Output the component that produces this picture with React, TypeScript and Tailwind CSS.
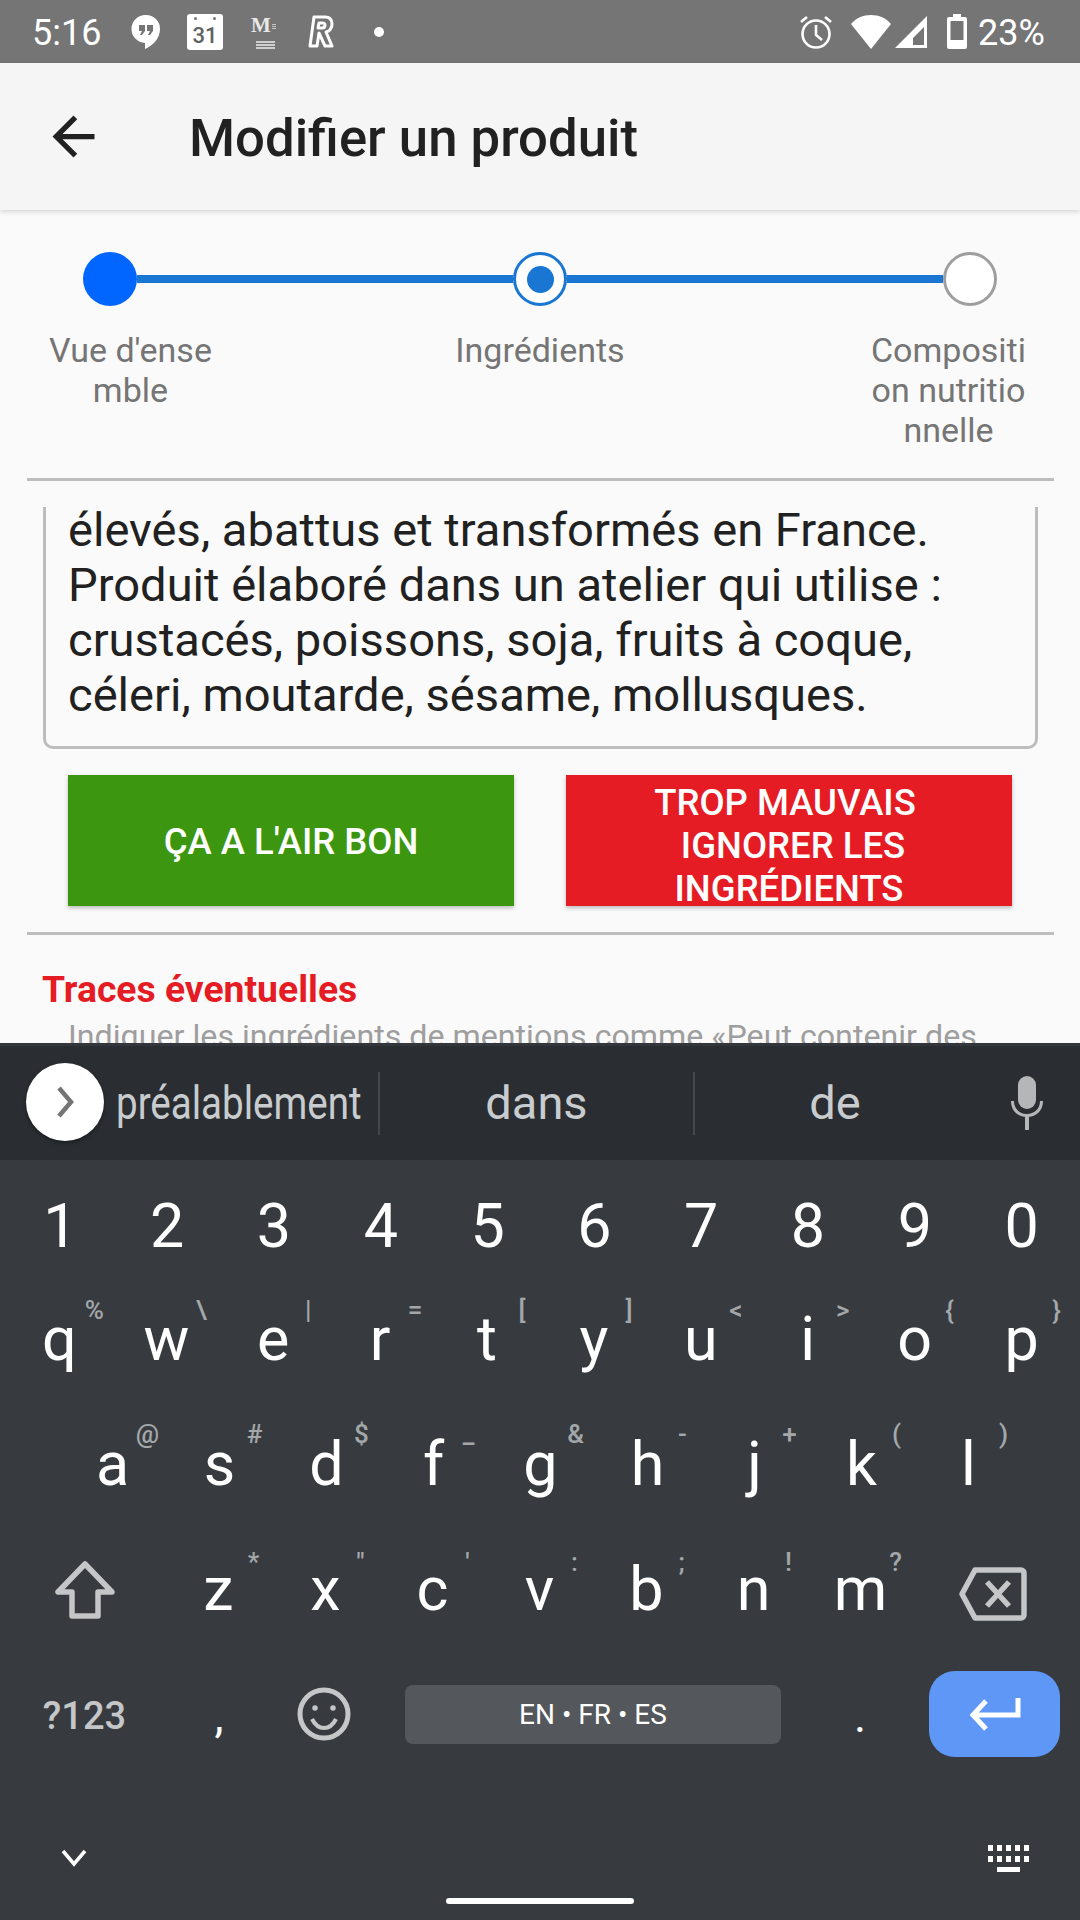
const digits = ["1", "2", "3", "4", "5", "6", "7", "8", "9", "0"];

const topRow = [
  ["q", "%"],
  ["w", "\\"],
  ["e", "|"],
  ["r", "="],
  ["t", "["],
  ["y", "]"],
  ["u", "<"],
  ["i", ">"],
  ["o", "{"],
  ["p", "}"],
];

const midRow = [
  ["a", "@"],
  ["s", "#"],
  ["d", "$"],
  ["f", "_"],
  ["g", "&"],
  ["h", "-"],
  ["j", "+"],
  ["k", "("],
  ["l", ")"],
];

const lowRow = [
  ["z", "*"],
  ["x", '"'],
  ["c", "'"],
  ["v", ":"],
  ["b", ";"],
  ["n", "!"],
  ["m", "?"],
];

const Key = ({ label, hint, hintTop }: { label: string; hint: string; hintTop: string }) => (
  <div className="relative flex items-center justify-center h-full text-[61px] text-white">
    <span>{label}</span>
    <span className={`absolute left-[calc(50%+35px)] ${hintTop} -translate-x-1/2 text-[26px] leading-[30px] font-medium text-[#a4a7aa]`}>
      {hint}
    </span>
  </div>
);

const StatusBar = () => (
  <div className="flex items-center h-[63px] bg-[#757575] text-white text-[36px] pl-[32px] pr-[30px] shrink-0">
    <span className="w-[99px] pt-[2px]">5:16</span>
    <svg width="30" height="36" viewBox="0 0 30 36" fill="white">
      <path d="M15 1a14 14 0 0 0-1 28v6c7-3 15-10 15-20A14 14 0 0 0 15 1z" />
      <path d="M8 11h6v6l-3 4H9l2-4H8zM16 11h6v6l-3 4h-2l2-4h-3z" fill="#757575" />
    </svg>
    <div className="relative ml-[26px] w-[36px] h-[36px] rounded-[3px] bg-white flex items-end justify-center text-[#616161] text-[22px] leading-[28px] font-medium">
      31
      <span className="absolute left-[7px] top-[3px] w-[3px] h-[3px] rounded-full bg-[#757575]" />
      <span className="absolute right-[7px] top-[3px] w-[3px] h-[3px] rounded-full bg-[#757575]" />
    </div>
    <div className="relative ml-[28px] w-[25px] h-[34px] text-[#e8e8e8]">
      <span className="absolute left-0 top-[-2px] text-[21px] leading-[24px] font-bold font-['Liberation_Serif']">M</span>
      <div className="absolute right-0 top-[9px] w-[4px] flex flex-col gap-[1px]">
        <div className="h-[1px] bg-[#c8c8c8]" />
        <div className="h-[1px] bg-[#c8c8c8]" />
        <div className="h-[1px] bg-[#c8c8c8]" />
      </div>
      <div className="absolute left-[5px] bottom-[0px] w-[19px] flex flex-col gap-[1px]">
        <div className="h-[2px] bg-[#cfcfcf]" />
        <div className="h-[2px] bg-[#cfcfcf]" />
        <div className="h-[2px] bg-[#cfcfcf]" />
      </div>
    </div>
    <svg className="ml-[31px]" width="27" height="34" viewBox="0 0 27 34" fill="none" stroke="white" strokeWidth="3" strokeLinejoin="round">
      <path d="M7 2h11c5 0 7 3 7 7 0 4-2 7-6 8l6 14h-7l-6-13-2 13H3z" />
      <path d="M12 8l-1 5h4c2 0 3-1 3-3s-1-2-3-2z" />
    </svg>
    <span className="ml-[40px] w-[10px] h-[10px] rounded-full bg-white" />
    <div className="flex-1" />
    <svg width="34" height="34" viewBox="0 0 34 34" fill="none" stroke="white" strokeWidth="2.6">
      <circle cx="17" cy="19" r="13.5" />
      <path d="M17 10v10l6 5M2 7l6-5M32 7l-6-5" />
    </svg>
    <svg className="ml-[18px]" width="40" height="34" viewBox="0 0 40 34" fill="white">
      <path d="M0 9C5 3 12 0 20 0s15 3 20 9L20 34z" />
    </svg>
    <svg className="ml-[4px]" width="33" height="34" viewBox="0 0 33 34" fill="white">
      <path fillRule="evenodd" d="M0 33 32 1v32zM18 30h11V12l-11 11z" />
    </svg>
    <svg className="ml-[19px]" width="20" height="35" viewBox="0 0 20 35" fill="white">
      <path fillRule="evenodd" d="M6 0h8v3h4a2 2 0 0 1 2 2v28a2 2 0 0 1-2 2H2a2 2 0 0 1-2-2V5a2 2 0 0 1 2-2h4zM3.500 7v19h13V7z" />
    </svg>
    <span className="ml-[11px] w-[72px] pt-[2px] whitespace-nowrap">23%</span>
  </div>
);

const Stepper = () => (
  <div className="h-[268px] shrink-0">
    <div className="flex items-center pt-[42px] pl-[83px] pr-[83px]">
      <div className="w-[54px] h-[54px] rounded-full bg-[#0066ff] shrink-0" />
      <div className="flex-1 h-[8px] bg-[#1976d2]" />
      <div className="w-[54px] h-[54px] rounded-full border-[3px] border-[#1976d2] bg-white shrink-0 flex items-center justify-center">
        <div className="w-[27px] h-[27px] rounded-full bg-[#1976d2]" />
      </div>
      <div className="flex-1 h-[8px] bg-[#1976d2]" />
      <div className="w-[54px] h-[54px] rounded-full border-[3px] border-[#9e9e9e] bg-white shrink-0" />
    </div>
    <div className="grid grid-cols-3 px-[49px] mt-[24px] text-[34px] leading-[40px] text-[#757575] text-center">
      <div className="justify-self-start">Vue d'ense<br />mble</div>
      <div className="justify-self-center">Ingrédients</div>
      <div className="justify-self-end mr-[5px]">Compositi<br />on nutritio<br />nnelle</div>
    </div>
  </div>
);

export default function App() {
  return (
    <div className="w-[1080px] h-[1920px] flex flex-col overflow-hidden bg-[#fafafa] font-[Roboto,sans-serif]">
      <StatusBar />
      <div className="flex items-center h-[147px] bg-[#f5f5f5] shadow-[0_2px_5px_rgba(0,0,0,0.15)] pl-[42px] shrink-0 relative">
        <svg width="63" height="63" viewBox="0 0 24 24" fill="#212121">
          <path d="M20 11H7.830l5.590-5.590L12 4l-8 8 8 8 1.410-1.410L7.830 13H20v-2z" />
        </svg>
        <span className="ml-[84px] pt-[4px] text-[52.700px] font-medium text-[#212121]">Modifier un produit</span>
      </div>

      <div className="h-[833px] overflow-hidden shrink-0">
        <Stepper />
        <div className="ml-[27px] mr-[26px] h-[3px] bg-[#bdbdbd]" />
        <div className="ml-[43px] mr-[42px] mt-[26px] h-[242px] overflow-hidden border-x-[3px] border-b-[3px] border-[#bdbdbd] rounded-b-[10px] pl-[22px] text-[47.100px] leading-[55px] text-[#212121]">
          <div className="-mt-[5px]">
            élevés, abattus et transformés en France.<br />
            Produit élaboré dans un atelier qui utilise :<br />
            crustacés, poissons, soja, fruits à coque,<br />
            céleri, moutarde, sésame, mollusques.
          </div>
        </div>
        <div className="flex justify-between mx-[68px] mt-[26px] text-white text-[36.500px] font-medium leading-[43px] text-center">
          <div className="w-[446px] h-[131px] pt-[2px] bg-[#3c960f] shadow-[0_2px_4px_rgba(0,0,0,0.25)] flex items-center justify-center">
            ÇA A L'AIR BON
          </div>
          <div className="w-[446px] h-[131px] pt-[6px] bg-[#e51c23] shadow-[0_2px_4px_rgba(0,0,0,0.25)] overflow-hidden">
            <span className="block -translate-x-[4px]">TROP MAUVAIS</span>
            <span className="block translate-x-[4px]">IGNORER LES</span>
            <span className="block">INGRÉDIENTS</span>
          </div>
        </div>
        <div className="mr-[26px] ml-[27px] mt-[26px] h-[3px] bg-[#bdbdbd]" />
        <div className="ml-[42px] mt-[34px] text-[37.300px] leading-[40px] font-bold text-[#e51c23]">Traces éventuelles</div>
        <div className="ml-[68px] mt-[7px] text-[32.200px] leading-[40px] text-[#9e9e9e] whitespace-nowrap">
          Indiquer les ingrédients de mentions comme «Peut contenir des
        </div>
      </div>

      {/* keyboard */}
      <div className="relative flex-1 bg-[#373b3f]">
        <div className="flex items-center h-[117px] bg-[#2a2e32] border-t-[3px] border-[#33373b] text-[#c9ccce] text-[47px]">
          <div className="ml-[26px] -mt-[3px] w-[78px] h-[78px] rounded-full bg-white shadow-[0_2px_4px_rgba(0,0,0,0.4)] flex items-center justify-center shrink-0">
            <svg width="24" height="34" viewBox="0 0 24 34" fill="none" stroke="#757575" strokeWidth="4.500">
              <path d="M6 3l12 14L6 31" />
            </svg>
          </div>
          <span className="ml-[12px] w-[262px] whitespace-nowrap origin-left scale-x-[0.82]">préalablement</span>
          <div className="w-[2px] h-[63px] bg-[#44484c]" />
          <span className="w-[313px] text-center">dans</span>
          <div className="w-[2px] h-[63px] bg-[#44484c]" />
          <span className="w-[280px] text-center">de</span>
          <svg width="38" height="54" viewBox="0 0 36 54" fill="#b4b6b8" className="ml-[33px]">
            <rect x="9" y="0" width="18" height="33" rx="9" />
            <path d="M2 25c0 10 7 16 16 16s16-6 16-16h-3c0 8-6 13-13 13S5 33 5 25z" />
            <rect x="16" y="40" width="4" height="14" />
          </svg>
        </div>

        <div className="grid grid-cols-10 pl-[7px] pr-[5px] pt-[10px] h-[123px] text-[61px] text-white text-center">
          {digits.map((d) => (
            <div key={d} className="flex items-center justify-center">{d}</div>
          ))}
        </div>
        <div className="grid grid-cols-10 pl-[6px] pr-[5px] h-[113px] mb-[6px]">
          {topRow.map(([l, h]) => (
            <Key key={l} label={l} hint={h} hintTop="top-[12px]" />
          ))}
        </div>
        <div className="grid grid-cols-9 pl-[59px] pr-[58px] h-[125px]">
          {midRow.map(([l, h]) => (
            <Key key={l} label={l} hint={h} hintTop="top-[17px]" />
          ))}
        </div>
        <div className="flex items-center h-[125px]">
          <div className="w-[165px] pl-[5px] flex justify-center">
            <svg width="62" height="60" viewBox="0 0 62 60" fill="none" stroke="#c4c6c8" strokeWidth="5.500" strokeLinejoin="round">
              <path d="M31 4 4 32h14v24h26V32h14z" />
            </svg>
          </div>
          <div className="grid grid-cols-7 w-[749px] h-full">
            {lowRow.map(([l, h]) => (
              <Key key={l} label={l} hint={h} hintTop="top-[20px]" />
            ))}
          </div>
          <div className="flex-1 flex justify-center pr-[8px] pt-[8px]">
            <svg width="68" height="58" viewBox="0 0 68 54" fill="none" stroke="#c4c6c8" strokeWidth="5.500" strokeLinejoin="round">
              <path d="M16 3h46a3 3 0 0 1 3 3v42a3 3 0 0 1-3 3H16L3 27z" />
              <path d="M28 15l22 24M50 15 28 39" />
            </svg>
          </div>
        </div>
        <div className="flex items-center h-[124px]">
          <span className="w-[169px] pt-[4px] text-center text-[38px] font-medium text-[#c4c6c8]">?123</span>
          <span className="w-[100px] pt-[4px] text-center text-[46px] text-white">,</span>
          <div className="w-[110px] flex justify-center">
            <svg width="54" height="54" viewBox="0 0 54 54" fill="none" stroke="#c4c6c8" strokeWidth="5">
              <circle cx="27" cy="27" r="24" />
              <circle cx="18" cy="21" r="2" fill="#c4c6c8" strokeWidth="1.500" />
              <circle cx="36" cy="21" r="2" fill="#c4c6c8" strokeWidth="1.500" />
              <path d="M15 32c3 6 7 9 12 9s9-3 12-9" strokeWidth="4" />
            </svg>
          </div>
          <div className="ml-[26px] w-[376px] h-[59px] pt-[1px] rounded-[8px] bg-[#54575b] flex items-center justify-center text-white text-[28px]">
            EN • FR • ES
          </div>
          <span className="w-[148px] pl-[10px] pt-[4px] text-center text-[46px] text-white">.</span>
          <div className="w-[131px] h-[86px] rounded-[26px] bg-[#5e97f6] flex items-center justify-center">
            <svg width="54" height="36" viewBox="0 0 54 36" fill="none" stroke="white" strokeWidth="5">
              <path d="M50 2v17H6M18 5 5 19l13 14" />
            </svg>
          </div>
        </div>
        <div className="flex items-center justify-between mt-[50px] h-[64px] pl-[60px] pr-[50px]">
          <svg width="28" height="18" viewBox="0 0 28 18" fill="none" stroke="white" strokeWidth="3.500">
            <path d="M3 2l11 13L25 2" />
          </svg>
          <div className="w-[42px] flex flex-wrap gap-x-[4px] gap-y-[5px]">
            {Array.from({ length: 10 }).map((_, i) => (
              <span key={i} className="w-[5px] h-[6px] bg-white" />
            ))}
            <span className="ml-[9px] w-[23px] h-[5px] bg-white" />
          </div>
        </div>
        <div className="absolute left-[446px] bottom-[16px] w-[188px] h-[6px] rounded-full bg-white" />
      </div>
    </div>
  );
}
